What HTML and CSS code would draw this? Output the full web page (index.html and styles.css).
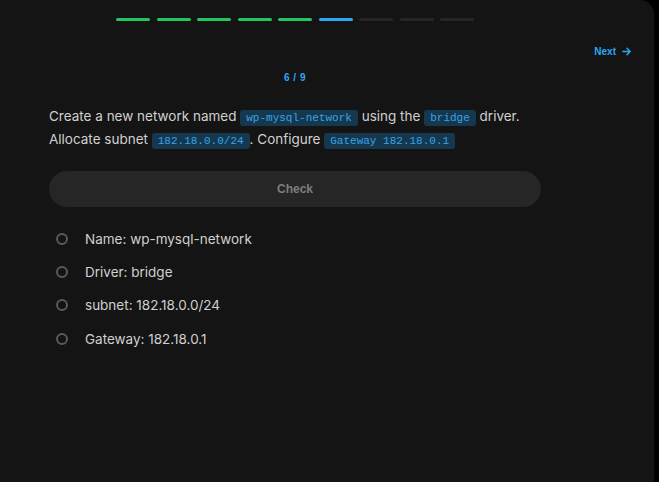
FILE: index.html
```html
<!DOCTYPE html>
<html>
<head>
<meta charset="utf-8">
<link rel="stylesheet" href="styles.css">
</head>
<body>
<div class="panel">
  <div class="progress">
    <span class="seg done"></span><span class="seg done"></span><span class="seg done"></span><span class="seg done"></span><span class="seg done"></span><span class="seg current"></span><span class="seg"></span><span class="seg"></span><span class="seg"></span>
  </div>
  <div class="nav">
    <a class="next">Next <svg width="11" height="11" viewBox="0 0 12 12" fill="none" stroke="currentColor" stroke-width="1.5" stroke-linecap="round" stroke-linejoin="round"><path d="M2 6h8M6.5 2.5 10 6l-3.5 3.5"/></svg></a>
  </div>
  <div class="content">
    <div class="step">6 / 9</div>
    <p class="task">Create a new network named <code>wp-mysql-network</code> using the <code>bridge</code> driver. Allocate subnet <code>182.18.0.0/24</code>. Configure <code>Gateway 182.18.0.1</code></p>
    <button class="check">Check</button>
    <ul class="checks">
      <li><span class="dot"></span>Name: wp-mysql-network</li>
      <li><span class="dot"></span>Driver: bridge</li>
      <li><span class="dot"></span>subnet: 182.18.0.0/24</li>
      <li><span class="dot"></span>Gateway: 182.18.0.1</li>
    </ul>
  </div>
</div>
</body>
</html>
```
FILE: styles.css
```css
html, body { margin: 0; padding: 0; background: #000; }
body { font-family: Inter, "Noto Sans", sans-serif; }
.panel {
  width: 654px;
  height: 482px;
  background: #141414;
  border-top-right-radius: 14px;
  box-sizing: border-box;
  padding-top: 18px;
}
.progress {
  display: flex;
  gap: 6.5px;
  padding-left: 116px;
}
.seg {
  width: 34px;
  height: 3px;
  border-radius: 2px;
  background: #262626;
}
.seg.done { background: #22c55e; }
.seg.current { background: #2aa8f4; }
.nav {
  display: flex;
  justify-content: flex-end;
  padding-right: 22px;
  margin-top: 21px;
  height: 18px;
  align-items: center;
}
.next {
  display: flex;
  align-items: center;
  gap: 5px;
  color: #2aa8f4;
  font-family: "Liberation Sans", Arial, sans-serif;
  font-size: 10px;
  font-weight: 700;
}
.next svg { display: block; }
.content {
  width: 492px;
  margin-left: 49px;
}
.step {
  text-align: center;
  color: #2aa8f4;
  font-family: "Liberation Sans", Arial, sans-serif;
  font-size: 10px;
  font-weight: 700;
  margin-top: 12px;
  letter-spacing: 0.5px;
}
.task {
  margin: 22px 0 0;
  font-size: 13.5px;
  line-height: 23px;
  color: #d0d0d0;
}
.task code {
  font-family: "Liberation Mono", "DejaVu Sans Mono", monospace;
  font-size: 11px;
  line-height: 1;
  color: #36a3e6;
  background: #16384f;
  border-radius: 3px;
  padding: 2px 6px;
}
.check {
  display: block;
  width: 100%;
  height: 36px;
  margin-top: 20px;
  border: none;
  border-radius: 18px;
  background: #262626;
  color: #7e7e7e;
  font-family: "Liberation Sans", Arial, sans-serif;
  font-size: 12px;
  font-weight: 700;
}
.checks {
  list-style: none;
  margin: 21px 0 0;
  padding: 0 0 0 7px;
  display: flex;
  flex-direction: column;
  gap: 12.4px;
}
.checks li {
  display: flex;
  align-items: center;
  gap: 17px;
  height: 21px;
  font-size: 13.5px;
  color: #d0d0d0;
}
.dot {
  width: 8px;
  height: 8px;
  border-radius: 50%;
  border: 2px solid #5a5a5a;
  flex: none;
}
```
